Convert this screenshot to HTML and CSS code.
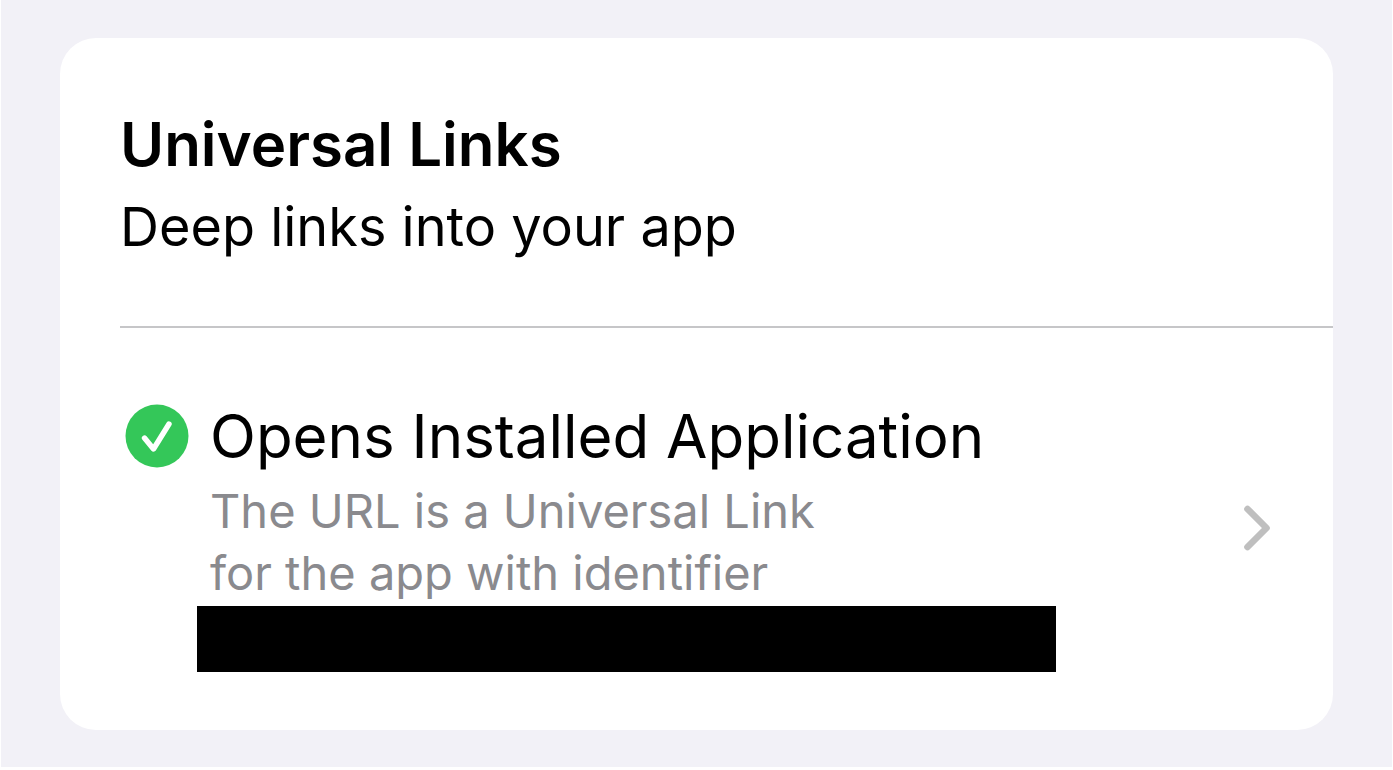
FILE: index.html
```html
<!DOCTYPE html>
<html lang="en">
<head>
    <meta charset="UTF-8">
    <meta name="viewport" content="width=device-width, initial-scale=1.0">
    <title>Universal Links</title>
    <link rel="stylesheet" href="styles.css">
</head>
<body>

    <main class="card">
        <header class="card-header">
            <h1>Universal Links</h1>
            <p>Deep links into your app</p>
        </header>

        <a class="row" href="#details">
            <svg class="check" viewBox="0 0 64 64" aria-hidden="true">
                <circle cx="32" cy="32" r="31.5" fill="#34c759"/>
                <path d="M19.5 34L28.5 45L44 20" fill="none" stroke="#fff" stroke-width="5.4" stroke-linecap="round" stroke-linejoin="round"/>
            </svg>
            <div class="info">
                <h2>Opens Installed Application</h2>
                <p>The URL is a Universal Link<br>for the app with identifier</p>
                <div class="redacted"></div>
            </div>
            <svg class="chevron" viewBox="0 0 28 46" aria-hidden="true">
                <path d="M4.5 4L23.5 23L4.5 42" fill="none" stroke="#bfbfbf" stroke-width="6.6" stroke-linecap="round" stroke-linejoin="round"/>
            </svg>
        </a>
    </main>

</body>
</html>
```

FILE: styles.css
```css
html {
    background-color: #fff;
}
body {
    margin: 0 1px;
    padding: 38px 59px 37px;
    background-color: #f2f1f7;
    font-family: Inter, "Liberation Sans", sans-serif;
    color: #000;
}
h1, h2, p {
    margin: 0;
}
.card {
    background-color: #fff;
    border-radius: 36px;
    padding-left: 60px;
}
.card-header {
    padding: 66px 0 64px;
    border-bottom: 2px solid #c6c6c8;
}
.card-header h1 {
    font-size: 60px;
    font-weight: 600;
    line-height: 80px;
}
.card-header p {
    margin-top: 8px;
    font-size: 54px;
    line-height: 70px;
}
.row {
    display: flex;
    align-items: center;
    padding: 66px 62px 58px 5px;
    color: inherit;
    text-decoration: none;
}
.check {
    width: 64px;
    height: 64px;
    flex: none;
    align-self: flex-start;
    margin-top: 10px;
}
.info {
    flex: 1;
    margin-left: 21px;
}
.info h2 {
    margin-bottom: 2px;
    font-size: 60px;
    font-weight: 400;
    line-height: 84px;
}
.info p {
    font-size: 47px;
    line-height: 62px;
    color: #8a8a8e;
}
.redacted {
    max-width: 859px;
    height: 66px;
    margin-top: 2px;
    margin-left: -13px;
    background-color: #000;
}
.chevron {
    width: 28px;
    height: 46px;
    flex: none;
    margin-bottom: 10px;
}
```
